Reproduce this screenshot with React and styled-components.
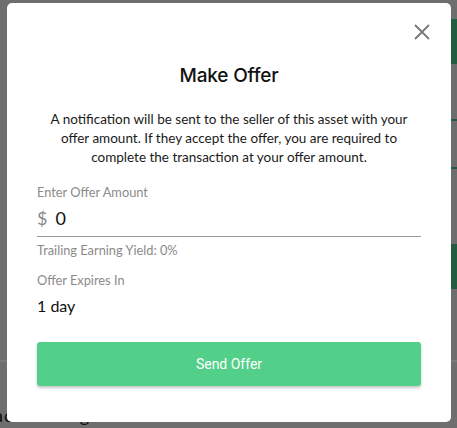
import React from 'react';
import styled, { createGlobalStyle } from 'styled-components';

const Global = createGlobalStyle`
  html, body { margin: 0; padding: 0; width: 457px; height: 428px; overflow: hidden; }
  body { font-family: Lato, "Noto Sans", sans-serif; }
  * { box-sizing: border-box; }
`;

const Stage = styled.div`
  position: relative;
  width: 457px;
  height: 428px;
  overflow: hidden;
  background: #dcdcdc;
`;

const Page = styled.div`
  display: flex;
  flex-direction: column;
  width: 100%;
  height: 100%;
`;

const PageTop = styled.div`
  display: flex;
  height: 360px;
`;

const PageMain = styled.div`
  flex: 1;
`;

const Side = styled.div`
  width: 60px;
  display: flex;
  flex-direction: column;
  align-items: flex-end;
`;

const SideGap = styled.div`
  height: ${(p) => p.$h}px;
`;

const SideBlock = styled.div`
  width: 100%;
  height: ${(p) => p.$h}px;
  background: #47b97f;
`;

const PageDivider = styled.div`
  height: 2px;
  background: #f4f4f4;
`;

const PageText = styled.div`
  padding: 42px 0 0 0;
  margin-left: -6px;
  font-size: 18px;
  color: #222;
  letter-spacing: 1px;
`;

const Overlay = styled.div`
  position: absolute;
  inset: 0;
  background: rgba(0, 0, 0, 0.5);
`;

const Modal = styled.div`
  position: absolute;
  left: 7px;
  top: 3px;
  width: 444px;
  height: 419px;
  background: #fff;
  border-radius: 5px;
  padding: 61px 30px 0 30px;
  display: flex;
  flex-direction: column;
`;

const Close = styled.button`
  position: absolute;
  top: 21px;
  right: 21px;
  width: 16px;
  height: 16px;
  padding: 0;
  border: none;
  background: none;
  display: flex;
  cursor: pointer;
`;

const Title = styled.h2`
  margin: 0;
  font-family: Inter, "Liberation Sans", sans-serif;
  font-weight: 500;
  font-size: 19px;
  line-height: 24px;
  color: #111;
  text-align: center;
  letter-spacing: -0.2px;
`;

const Paragraph = styled.p`
  margin: 22px 0 0 0;
  font-size: 13.5px;
  line-height: 19px;
  color: #1a1a1a;
  text-align: center;
`;

const Label = styled.div`
  margin-top: ${(p) => p.$mt}px;
  font-size: 12.8px;
  line-height: 16px;
  color: #8a8a8a;
`;

const AmountRow = styled.div`
  margin-top: 6px;
  display: flex;
  align-items: center;
  gap: 8px;
  height: 31px;
  padding-bottom: 7px;
  border-bottom: 1px solid #9a9a9a;
`;

const Currency = styled.span`
  font-size: 18px;
  line-height: 24px;
  color: #8a8a8a;
`;

const Amount = styled.span`
  font-size: 18px;
  line-height: 24px;
  color: #111;
`;

const Value = styled.div`
  margin-top: 7px;
  font-size: 16px;
  line-height: 22px;
  color: #111;
`;

const SendButton = styled.button`
  margin-top: 25px;
  height: 44px;
  width: 100%;
  border: none;
  border-radius: 3px;
  background: #52cf88;
  color: #fff;
  font-family: Roboto, "Liberation Sans", sans-serif;
  font-size: 14px;
  box-shadow: 0 2px 3px rgba(0, 0, 0, 0.22);
  cursor: pointer;
`;

export default function App() {
  return (
    <>
      <Global />
      <Stage>
        <Page>
          <PageTop>
            <PageMain />
            <Side>
              <SideGap $h={19} />
              <SideBlock $h={45} />
              <SideGap $h={55} />
              <SideBlock $h={2} />
              <SideGap $h={46} />
              <SideBlock $h={2} />
              <SideGap $h={75} />
              <SideBlock $h={45} />
            </Side>
          </PageTop>
          <PageDivider />
          <PageText>accounting</PageText>
        </Page>
        <Overlay />
        <Modal>
          <Close aria-label="Close">
            <svg width="16" height="16" viewBox="0 0 16 16">
              <path d="M1 1 L15 15 M15 1 L1 15" stroke="#777" strokeWidth="1.8" fill="none" />
            </svg>
          </Close>
          <Title>Make Offer</Title>
          <Paragraph>
            A notification will be sent to the seller of this asset with your offer amount. If they
            accept the offer, you are required to complete the transaction at your offer amount.
          </Paragraph>
          <Label $mt={17}>Enter Offer Amount</Label>
          <AmountRow>
            <Currency>$</Currency>
            <Amount>0</Amount>
          </AmountRow>
          <Label $mt={5}>Trailing Earning Yield: 0%</Label>
          <Label $mt={14}>Offer Expires In</Label>
          <Value>1 day</Value>
          <SendButton>Send Offer</SendButton>
        </Modal>
      </Stage>
    </>
  );
}
